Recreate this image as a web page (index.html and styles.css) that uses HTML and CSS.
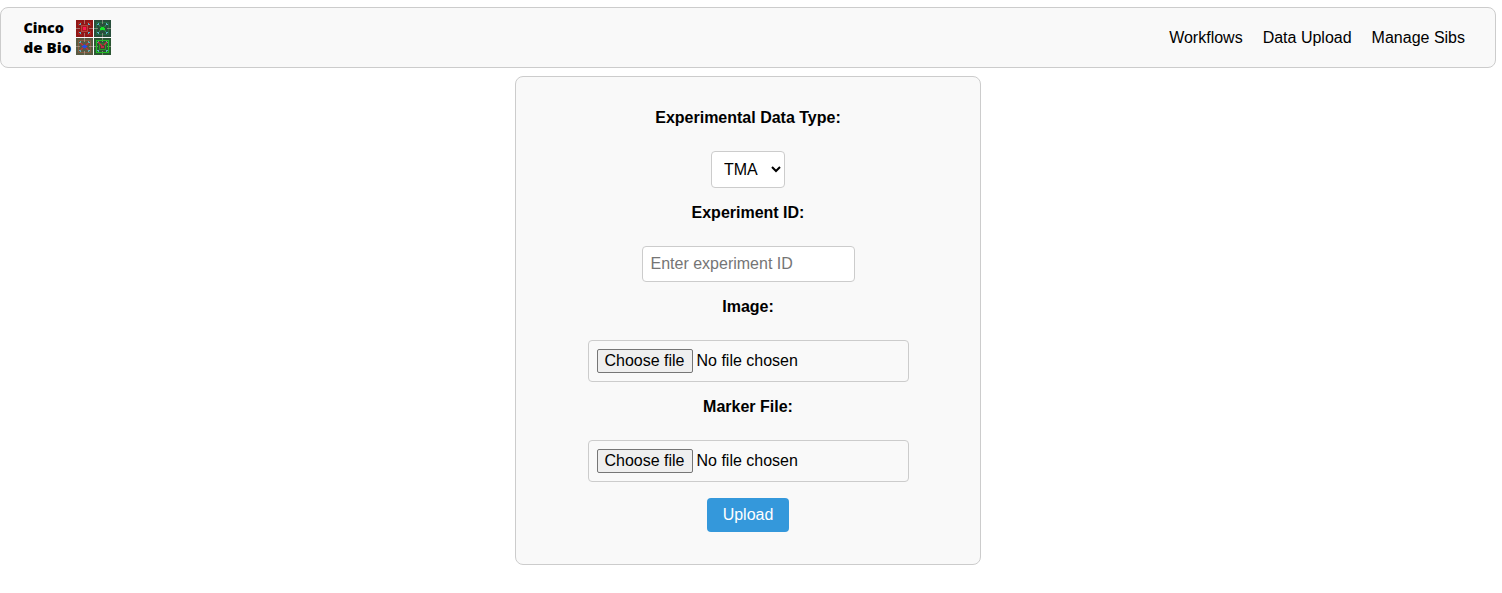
FILE: index.html
```html
<!DOCTYPE html>
<html lang="en-GB">
<head>
<meta charset="utf-8">
<title>Cinco de Bio</title>
<link rel="stylesheet" href="styles.css">
</head>
<body>
<header class="navbar">
  <a class="brand">
    <svg class="logo" width="88" height="40" viewBox="0 0 88 40">
      <defs>
        <g id="rays">
          <path d="M8.5 0v4M8.5 13v4M0 8.5h4M13 8.5h4" stroke="#b9aaa0" stroke-opacity=".6"/>
          <path d="M4 4l2 2M13 4l-2 2M4 13l2-2M13 13l-2-2" stroke="#409d9f" stroke-opacity=".6"/>
          <path d="M3 4h2v1h-2zM12 4h2v1h-2zM3 12h2v1h-2zM12 12h2v1h-2zM4 3h1v1h-1zM12 3h1v1h-1zM4 13h1v1h-1zM12 13h1v1h-1z" fill="#5cb4c4"/>
        </g>
      </defs>
      <text class="logo-text" x=".5" y="15" textLength="40.5" lengthAdjust="spacingAndGlyphs">Cinco</text>
      <text class="logo-text" x=".5" y="35" textLength="48" lengthAdjust="spacingAndGlyphs">de Bio</text>
      <g transform="translate(53 2)">
        <path d="M0 0h17v17h-17z" fill="#8f1717"/>
        <path d="M2.5 6v-3.5h3.500M11 2.500h3.500v3.500M2.500 11v3.500h3.500M11 14.500h3.500v-3.500" fill="none" stroke="#ad2420"/>
        <use href="#rays"/>
        <path d="M5.500 5.500h6v6h-6z" fill="#a51f20" stroke="#b5443c"/>
        <path d="M7 7h3v3h-3z" fill="#ff1550"/>
      </g>
      <g transform="translate(71 2)">
        <path d="M0 0h17v17h-17z" fill="#294f3c"/>
        <path d="M2.500 2.500h12v12h-12z" fill="none" stroke="#237044"/>
        <use href="#rays"/>
        <path d="M5 6l3.500 1.500 3.500-1.500M5 11l3.500-1.500 3.500 1.500" fill="none" stroke="#259b35" stroke-width=".8"/>
        <path d="M7 7h3v1h1v2h-5v-2h1z" fill="#18e52a"/>
      </g>
      <g transform="translate(53 20)">
        <path d="M0 0h17v17h-17z" fill="#585b42"/>
        <path d="M2.500 2.500h12v12h-12z" fill="none" stroke="#875b42"/>
        <use href="#rays"/>
        <path d="M4.500 5l4 3.500 4-3.500M4.500 12l4-3.500 4 3.500" fill="none" stroke="#c83038" stroke-width="1.300"/>
        <path d="M5.500 8.500l3-2 3 2-3 2z" fill="#214cf0"/>
      </g>
      <g transform="translate(71 20)">
        <path d="M0 0h17v17h-17z" fill="#2b5633"/>
        <use href="#rays"/>
        <path d="M2.500 2.500h12v12h-12z" fill="none" stroke="#22bb23" stroke-width="1.200"/>
        <path d="M5.500 6h6v5.500h-6z" fill="#484033" stroke="#299b25"/>
        <path d="M4 4l4 4M13 4l-3 3" stroke="#ce2840" stroke-width="1.300"/>
        <path d="M7 8h3v2h-3z" fill="#c12d43"/>
      </g>
    </svg>
  </a>
  <nav class="links">
    <a>Workflows</a>
    <a>Data Upload</a>
    <a>Manage Sibs</a>
  </nav>
</header>
<main class="panel">
  <label class="caption" for="type">Experimental Data Type:</label>
  <select class="field type" id="type"><option>TMA</option></select>
  <label class="caption" for="experiment">Experiment ID:</label>
  <input class="field experiment" id="experiment" type="text" placeholder="Enter experiment ID">
  <span class="caption">Image:</span>
  <div class="field file"><button class="choose" type="button">Choose file</button><span>No file chosen</span></div>
  <span class="caption">Marker File:</span>
  <div class="field file"><button class="choose" type="button">Choose file</button><span>No file chosen</span></div>
  <button class="upload" type="button">Upload</button>
</main>
</body>
</html>
```
FILE: styles.css
```css
* { box-sizing: border-box; }
body {
  margin: 0;
  padding-top: 7px;
  width: 1496px;
  background: #fff;
  color: #000;
  font: 16px/18px "Liberation Sans", Arial, sans-serif;
}
.navbar {
  display: flex;
  align-items: center;
  justify-content: space-between;
  height: 61px;
  padding: 0 30px 0 22px;
  background: #f9f9f9;
  border: 1px solid #ccc;
  border-radius: 8px;
}
.brand { display: flex; }
.logo-text { font: 800 14px "Open Sans", "Noto Sans", sans-serif; }
.links { display: flex; gap: 20px; }
.panel {
  display: flex;
  flex-direction: column;
  align-items: center;
  width: 466px;
  height: 489px;
  margin: 8px auto 0;
  padding-top: 32px;
  background: #f9f9f9;
  border: 1px solid #ccc;
  border-radius: 8px;
}
.caption { margin-bottom: 24px; font-weight: bold; }
.field {
  margin: 0 0 16px;
  padding: 8px;
  border: 1px solid #ccc;
  border-radius: 4px;
  font: inherit;
}
.type { width: 74px; height: 37px; background-color: #fff; color: #000; }
.experiment { width: 213px; height: 36px; background: #fff; }
.experiment::placeholder { color: #757575; }
.file {
  display: flex;
  align-items: center;
  gap: 4px;
  width: 321px;
  height: 42px;
}
.choose {
  width: 96px;
  height: 24px;
  padding: 0;
  background: #efefef;
  border: 1px solid #767676;
  border-radius: 2px;
  color: #000;
  font: inherit;
}
.upload {
  width: 82px;
  height: 34px;
  padding: 0;
  background: #3498db;
  border: 0;
  border-radius: 4px;
  color: #fff;
  font: inherit;
}
```
